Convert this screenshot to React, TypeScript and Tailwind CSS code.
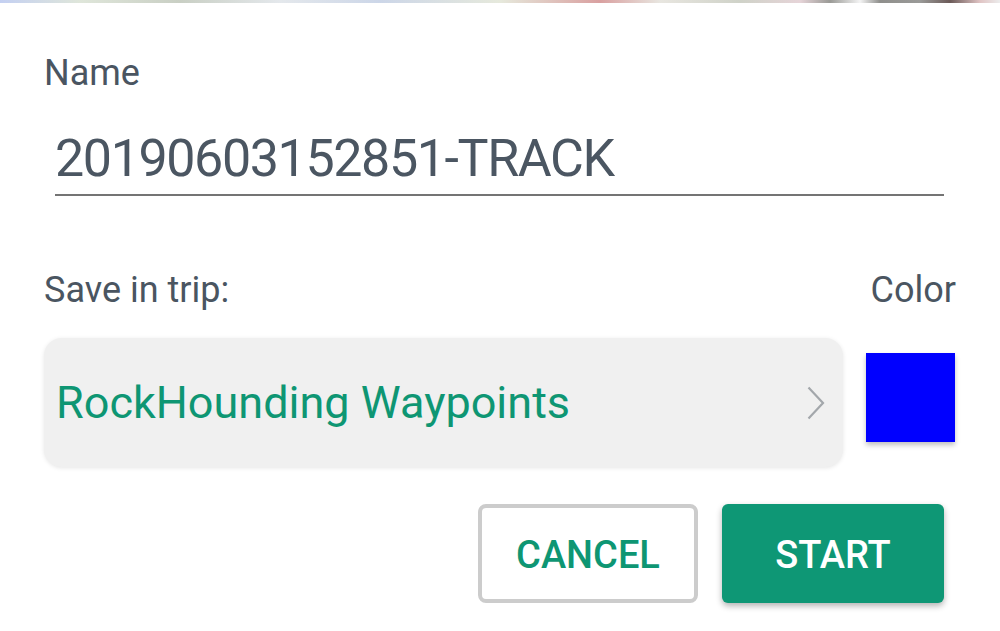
export default function App() {
  return (
    <div className="w-[1000px] h-[631px] overflow-hidden bg-white font-['Roboto',sans-serif]">
      {/* blurred strip of the photo behind the dialog */}
      <div className="h-[3px] bg-[linear-gradient(90deg,#c4d0f2_0%,#dfe6da_8%,#c9cfc4_18%,#e4e8ec_28%,#ccd6e8_38%,#e6e9dc_50%,#d9a0a0_60%,#e8e6e0_66%,#cfd2c8_74%,#e6d4d8_80%,#9a9a96_83%,#f4f4f4_86%,#8f8f8c_88%,#9a9a98_92%,#6b5a58_95%,#e0c4c4_98%,#ececec_100%)]" />

      <div className="px-[44px]">
        <div className="mt-[52px] text-[36px] leading-[36px] text-[#4a5561]">Name</div>

        <div className="mt-[40px] ml-[11px] mr-[12px] border-b-2 border-[#747474] pb-[12px]">
          <div className="text-[52px] leading-[51px] tracking-[-1.4px] text-[#4b5662] translate-y-[2px]">20190603152851-TRACK</div>
        </div>

        <div className="mt-[76px] flex justify-between text-[36px] leading-[36px] text-[#4a5561]">
          <span>Save in trip:</span>
          <span>Color</span>
        </div>

        <div className="mt-[30px] flex items-start">
          <div className="flex h-[129px] w-[799px] items-center justify-between rounded-[18px] bg-[#f0f0f0] pl-[12px] pr-[18px] shadow-[0_1px_4px_rgba(0,0,0,0.1)]">
            <span className="text-[45px] leading-[45px] text-[#0e9673]">RockHounding Waypoints</span>
            <svg width="18" height="34" viewBox="0 0 18 34" fill="none">
              <polyline points="1.5,1.5 16,17 1.5,32.5" stroke="#a3a7ab" strokeWidth="2.2" />
            </svg>
          </div>
          <div className="ml-[23px] mt-[15px] h-[89px] w-[89px] bg-[#0000ff] shadow-[0_3px_5px_rgba(0,0,0,0.25)]" />
        </div>

        <div className="mt-[37px] mr-[12px] flex justify-end gap-[24px]">
          <button className="flex h-[99px] w-[220px] items-center justify-center rounded-[8px] border-4 border-[#cccccc] bg-white pt-[4px] text-[38px] font-medium text-[#0e9673]">
            CANCEL
          </button>
          <button className="flex h-[99px] w-[222px] items-center justify-center rounded-[6px] bg-[#0e9775] pt-[4px] text-[38px] font-medium text-white shadow-[0_3px_6px_rgba(0,0,0,0.3)]">
            START
          </button>
        </div>
      </div>
    </div>
  );
}
